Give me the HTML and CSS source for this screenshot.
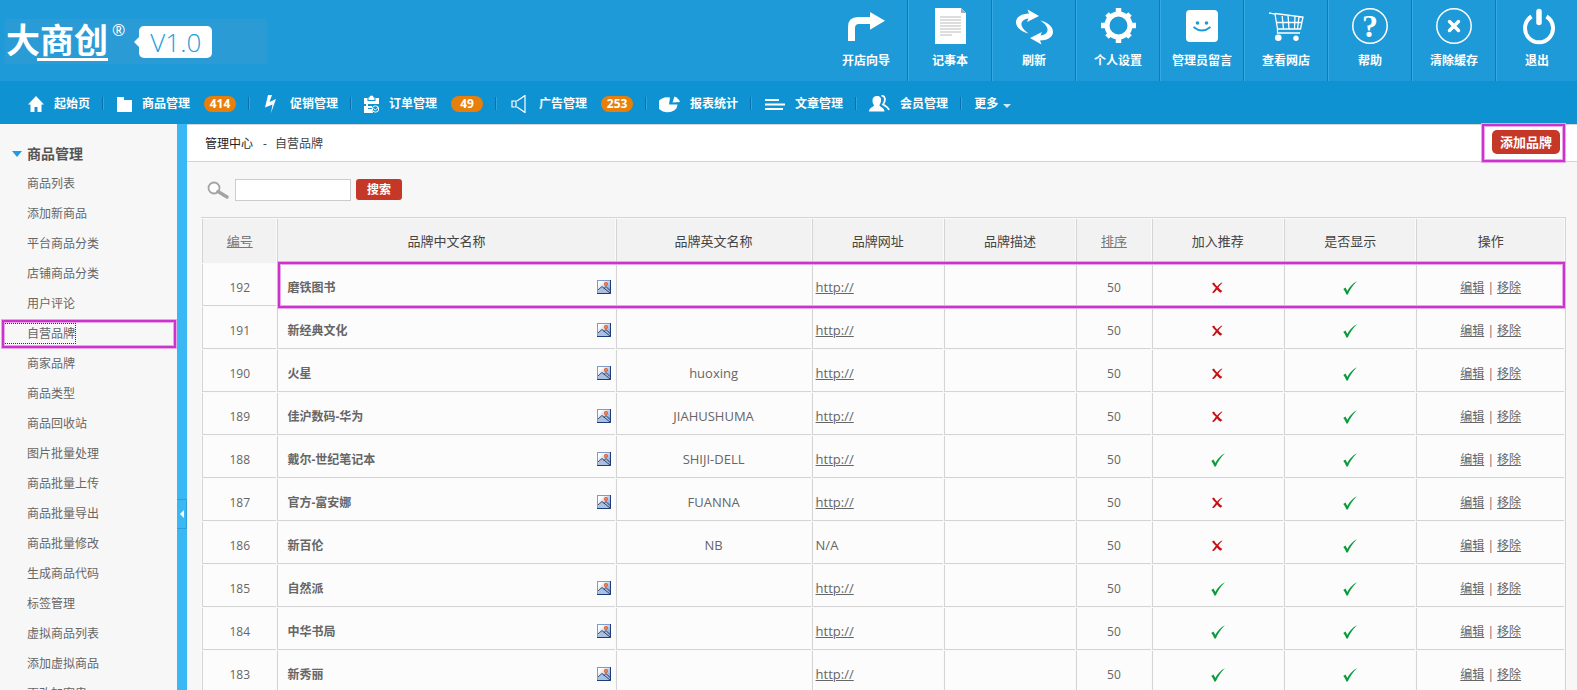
FILE: index.html
```html
<!DOCTYPE html>
<html lang="zh-CN">

<head>
  <meta charset="UTF-8" />
  <title>管理中心 - 自营品牌</title>
  <link rel="stylesheet" href="styles.css">
</head>

<body>

  <!-- 表格里重复使用的图标 -->
  <svg class="sprite" aria-hidden="true">
    <defs>
      <linearGradient id="sky" x1="0" y1="0" x2="1" y2="1">
        <stop offset="0.2" stop-color="#ffffff" />
        <stop offset="1" stop-color="#5f86c9" />
      </linearGradient>
    </defs>
    <symbol id="pic" viewBox="0 0 14 14">
      <rect x="0.5" y="0.5" width="13" height="13" fill="url(#sky)" stroke="#7f9cc6" />
      <path d="M13.5 0v13.5H0" fill="none" stroke="#1d3c7c" />
      <path d="M1 11.5 5 7l2 2 2-2 4 5v1H1z" fill="#a9c0e6" />
      <path d="M1 10 5 6.500l8 6.500M7 8.500l2-2 4 4" fill="none" stroke="#26334d" stroke-width="0.9" />
      <circle cx="9" cy="4" r="2" fill="#e2562a" />
      <circle cx="9" cy="4" r="0.8" fill="#ffc07a" />
    </symbol>
    <symbol id="yes" viewBox="0 0 14 14">
      <path d="M0.3 8 2.5 6.600 4.300 10C6.500 5.800 9.600 2.400 14 0.200 9.800 4 7 8.400 4.800 13.500H3.400C2.600 11.200 1.600 9.600 0.300 8z" fill="#0a9c3c" />
    </symbol>
    <symbol id="no" viewBox="0 0 14 14">
      <path d="M1 2.4 3 1.4C4 3 5 4.4 6.2 5.4 7.6 3.6 9 2.4 11 1.4L11.4 2C9.6 3.4 8.4 4.8 7.4 6.6 8.4 8 9.8 9.2 11.4 10l-2 1.8C8 10.8 7 9.6 6 8.4 4.8 10 4 11 2.8 12L1 11.4C2.4 10 3.8 8.4 4.8 6.8 3.4 5.4 2 4 1 2.4z" fill="#c80f12" />
    </symbol>
  </svg>

  <header class="top">
    <div class="logo">
      <span class="logo-name">大商创</span>
      <span class="logo-reg">®</span>
      <span class="logo-ver">V1.0</span>
    </div>
    <div class="tools">
      <a href="#">
        <svg viewBox="0 0 40 36"><path d="M2 33V19Q2 9 12 9h12V4l15 8.700-15 9V16H13q-4 0-4 4v13z" /></svg>
        开店向导
      </a>
      <a href="#">
        <svg viewBox="0 0 40 36"><path d="M5 0h26l5 5v31H5z" /><path d="M31 0v5h5z" fill="#aaa" /><path d="M10 9h21M10 12h21M10 15h21M10 18h21M10 21h21M10 24h21M10 27h12" stroke="#ddd" stroke-width="2" /></svg>
        记事本
      </a>
      <a href="#">
        <svg viewBox="0 0 40 36"><path id="turn" d="M14.500 25.500C5 23 2 18 2 14 2 9 8 5.500 15 5.500L13.500 1.500 25 8 13 14 14.500 10.500C10 11 7 13.500 7.500 17 8 20 11 23 14.500 25.500z" /><use href="#turn" transform="rotate(180 20.500 19)" /></svg>
        刷新
      </a>
      <a href="#">
        <svg viewBox="0 0 40 36"><circle cx="20.5" cy="17.500" r="11.500" fill="none" stroke="#fff" stroke-width="5" /><path d="M20.500 0v6M20.500 29v6M3 17.500h6M32 17.500h6" stroke="#fff" stroke-width="5.500" /><path d="M9 6l3 3M32 6l-3 3M9 29l3-3M32 29l-3-3" stroke="#fff" stroke-width="5" /></svg>
        个人设置
      </a>
      <a href="#">
        <svg viewBox="0 0 40 36"><rect x="4" y="2" width="32" height="32" rx="4" /><circle cx="15.5" cy="15" r="1.800" fill="#1e9ad8" /><circle cx="24.500" cy="15" r="1.800" fill="#1e9ad8" /><path d="M11.500 19q8.500 7 17 0" fill="none" stroke="#1e9ad8" stroke-width="1.800" /></svg>
        管理员留言
      </a>
      <a href="#">
        <svg viewBox="0 0 40 36"><path d="M3 5l6 1 2.500 15v4H34M9 5.500l28 3.500-2.500 12H11.500M10.500 14.500h25M16 6.500l1.500 14.500M22 7l1 14M29 8l-.5 13M33 8.500 31.500 21" fill="none" stroke="#fff" stroke-width="1.300" /><circle cx="12.300" cy="29.700" r="3.300" /><circle cx="30" cy="30.300" r="2.700" /></svg>
        查看网店
      </a>
      <a href="#">
        <svg viewBox="0 0 40 36"><circle cx="20" cy="18" r="17.200" fill="none" stroke="#fff" stroke-width="1.500" /><text x="20" y="29" class="qmark">?</text></svg>
        帮助
      </a>
      <a href="#">
        <svg viewBox="0 0 40 36"><circle cx="20" cy="18" r="17.200" fill="none" stroke="#fff" stroke-width="1.500" /><path d="M15.500 13.500l9 9M24.500 13.500l-9 9" stroke="#fff" stroke-width="3.500" stroke-linecap="round" /></svg>
        清除缓存
      </a>
      <a href="#">
        <svg viewBox="0 0 40 36"><path d="M14.500 8.500a14 14 0 1 0 15 0" fill="none" stroke="#fff" stroke-width="4" /><path d="M22 3.500v11" stroke="#fff" stroke-width="5.500" stroke-linecap="round" /></svg>
        退出
      </a>
    </div>
  </header>

  <nav class="menu">
    <a href="#">
      <svg class="w16" viewBox="0 0 16 18"><path d="M8 1 0 9.500h2.500V17H6.500v-5h3v5h4V9.500H16z" /></svg>
      <span>起始页</span>
    </a>
    <a href="#">
      <svg class="w16" viewBox="0 0 16 18"><path d="M1 2h7v3h8v12H1z" /></svg>
      <span>商品管理</span> <span class="badge">414</span>
    </a>
    <a href="#">
      <svg class="w18" viewBox="0 0 18 18"><path d="M6 0h4L7.500 7 14 4 9 18 10.500 9.500 3 12.500z" /></svg>
      <span>促销管理</span>
    </a>
    <a href="#">
      <svg class="w15" viewBox="0 0 15 18"><path d="M0 3h3.500v3h8V3H15v6H4v2h4v2H4v1h4l1 4H0V11h2V9H0z" /><path d="M4.500 2.500h1a2 2 0 0 1 4 0h1V5h-6z" /><circle cx="11.500" cy="14" r="3.200" fill="none" stroke="#fff" /><path d="M9.500 13.500l2 1.500 3-3" fill="none" stroke="#fff" /></svg>
      <span>订单管理</span> <span class="badge">49</span>
    </a>
    <a href="#">
      <svg class="w20" viewBox="0 0 20 18"><path d="M3 6h4v6H3zM8 6l8-5.500v17L8 12" fill="none" stroke="#fff" stroke-width="1.200" /></svg>
      <span>广告管理</span> <span class="badge">253</span>
    </a>
    <a href="#">
      <svg class="w21" viewBox="0 0 21 18"><path d="M11 2.500A10 7.500 0 1 0 18.500 9.500L10 9.500z" /><path d="M13.500 7.500 15.500 1.500Q20 3.500 21 7z" /></svg>
      <span>报表统计</span>
    </a>
    <a href="#">
      <svg class="w21" viewBox="0 0 21 18"><path d="M1 5h14M1 9.500h20M1 14h18" stroke="#fff" stroke-width="2" /></svg>
      <span>文章管理</span>
    </a>
    <a href="#">
      <svg class="w21" viewBox="0 0 21 18"><path d="M8 1c3 0 4.500 2 4 5-.3 2-1 3-1.500 4 0 2 5 2.500 5 6.500H0c0-4 5-4.500 5-6.500C4 9 3.500 7.500 3.500 5.500 3.500 2.500 5 1 8 1z" /><path d="M12.500.700c4 0 4.500 5 1.500 8.800 3 1.500 5 3 6 5.500" fill="none" stroke="#fff" stroke-width="1.800" /></svg>
      <span>会员管理</span>
    </a>
    <a href="#"><span>更多</span> <i class="caret"></i></a>
  </nav>

  <div class="page">

    <aside class="side">
      <h3>商品管理</h3>
      <ul>
        <li><a href="#">商品列表</a></li>
        <li><a href="#">添加新商品</a></li>
        <li><a href="#">平台商品分类</a></li>
        <li><a href="#">店铺商品分类</a></li>
        <li><a href="#">用户评论</a></li>
        <li class="marked"><a href="#">自营品牌</a></li>
        <li><a href="#">商家品牌</a></li>
        <li><a href="#">商品类型</a></li>
        <li><a href="#">商品回收站</a></li>
        <li><a href="#">图片批量处理</a></li>
        <li><a href="#">商品批量上传</a></li>
        <li><a href="#">商品批量导出</a></li>
        <li><a href="#">商品批量修改</a></li>
        <li><a href="#">生成商品代码</a></li>
        <li><a href="#">标签管理</a></li>
        <li><a href="#">虚拟商品列表</a></li>
        <li><a href="#">添加虚拟商品</a></li>
        <li><a href="#">更改加密串</a></li>
      </ul>
    </aside>

    <div class="split"><button type="button" aria-label="收起菜单"></button></div>

    <main class="main">
      <div class="crumbs">
        <a href="#">管理中心</a>
        <span>-</span>
        <span>自营品牌</span>
        <div class="add-wrap"><button type="button" class="btn add">添加品牌</button></div>
      </div>

      <form class="search">
        <label for="keyword" aria-label="品牌名称">
          <svg viewBox="0 0 24 20"><circle cx="8" cy="8" r="5.500" fill="#fff" stroke="#a3a3a3" stroke-width="1.800" /><path d="M12 11.500 21 17" stroke="#a3a3a3" stroke-width="3.500" stroke-linecap="round" /></svg>
        </label>
        <input id="keyword" type="text" />
        <button type="button" class="btn">搜索</button>
      </form>

      <div class="list">
        <table>
          <colgroup>
            <col class="c-id"><col class="c-name"><col class="c-en"><col class="c-mid"><col class="c-mid"><col class="c-id"><col class="c-mid"><col class="c-mid"><col>
          </colgroup>
          <thead>
            <tr>
              <th><a href="#">编号</a></th>
              <th>品牌中文名称</th>
              <th>品牌英文名称</th>
              <th>品牌网址</th>
              <th>品牌描述</th>
              <th><a href="#">排序</a></th>
              <th>加入推荐</th>
              <th>是否显示</th>
              <th>操作</th>
            </tr>
          </thead>
          <tbody>
            <tr>
              <td>192</td>
              <td class="name"><div>磨铁图书 <svg><use href="#pic" /></svg></div></td>
              <td class="en"></td>
              <td class="url"><a href="#">http://</a></td>
              <td></td>
              <td>50</td>
              <td><svg><use href="#no" /></svg></td>
              <td><svg><use href="#yes" /></svg></td>
              <td><a href="#">编辑</a> | <a href="#">移除</a></td>
            </tr>
            <tr>
              <td>191</td>
              <td class="name"><div>新经典文化 <svg><use href="#pic" /></svg></div></td>
              <td class="en"></td>
              <td class="url"><a href="#">http://</a></td>
              <td></td>
              <td>50</td>
              <td><svg><use href="#no" /></svg></td>
              <td><svg><use href="#yes" /></svg></td>
              <td><a href="#">编辑</a> | <a href="#">移除</a></td>
            </tr>
            <tr>
              <td>190</td>
              <td class="name"><div>火星 <svg><use href="#pic" /></svg></div></td>
              <td class="en">huoxing</td>
              <td class="url"><a href="#">http://</a></td>
              <td></td>
              <td>50</td>
              <td><svg><use href="#no" /></svg></td>
              <td><svg><use href="#yes" /></svg></td>
              <td><a href="#">编辑</a> | <a href="#">移除</a></td>
            </tr>
            <tr>
              <td>189</td>
              <td class="name"><div>佳沪数码-华为 <svg><use href="#pic" /></svg></div></td>
              <td class="en">JIAHUSHUMA</td>
              <td class="url"><a href="#">http://</a></td>
              <td></td>
              <td>50</td>
              <td><svg><use href="#no" /></svg></td>
              <td><svg><use href="#yes" /></svg></td>
              <td><a href="#">编辑</a> | <a href="#">移除</a></td>
            </tr>
            <tr>
              <td>188</td>
              <td class="name"><div>戴尔-世纪笔记本 <svg><use href="#pic" /></svg></div></td>
              <td class="en">SHIJI-DELL</td>
              <td class="url"><a href="#">http://</a></td>
              <td></td>
              <td>50</td>
              <td><svg><use href="#yes" /></svg></td>
              <td><svg><use href="#yes" /></svg></td>
              <td><a href="#">编辑</a> | <a href="#">移除</a></td>
            </tr>
            <tr>
              <td>187</td>
              <td class="name"><div>官方-富安娜 <svg><use href="#pic" /></svg></div></td>
              <td class="en">FUANNA</td>
              <td class="url"><a href="#">http://</a></td>
              <td></td>
              <td>50</td>
              <td><svg><use href="#no" /></svg></td>
              <td><svg><use href="#yes" /></svg></td>
              <td><a href="#">编辑</a> | <a href="#">移除</a></td>
            </tr>
            <tr>
              <td>186</td>
              <td class="name"><div>新百伦</div></td>
              <td class="en">NB</td>
              <td class="url">N/A</td>
              <td></td>
              <td>50</td>
              <td><svg><use href="#no" /></svg></td>
              <td><svg><use href="#yes" /></svg></td>
              <td><a href="#">编辑</a> | <a href="#">移除</a></td>
            </tr>
            <tr>
              <td>185</td>
              <td class="name"><div>自然派 <svg><use href="#pic" /></svg></div></td>
              <td class="en"></td>
              <td class="url"><a href="#">http://</a></td>
              <td></td>
              <td>50</td>
              <td><svg><use href="#yes" /></svg></td>
              <td><svg><use href="#yes" /></svg></td>
              <td><a href="#">编辑</a> | <a href="#">移除</a></td>
            </tr>
            <tr>
              <td>184</td>
              <td class="name"><div>中华书局 <svg><use href="#pic" /></svg></div></td>
              <td class="en"></td>
              <td class="url"><a href="#">http://</a></td>
              <td></td>
              <td>50</td>
              <td><svg><use href="#yes" /></svg></td>
              <td><svg><use href="#yes" /></svg></td>
              <td><a href="#">编辑</a> | <a href="#">移除</a></td>
            </tr>
            <tr>
              <td>183</td>
              <td class="name"><div>新秀丽 <svg><use href="#pic" /></svg></div></td>
              <td class="en"></td>
              <td class="url"><a href="#">http://</a></td>
              <td></td>
              <td>50</td>
              <td><svg><use href="#yes" /></svg></td>
              <td><svg><use href="#yes" /></svg></td>
              <td><a href="#">编辑</a> | <a href="#">移除</a></td>
            </tr>
          </tbody>
        </table>
      </div>
    </main>

  </div>

</body>

</html>
```
FILE: styles.css
```css
*,
*::before,
*::after {
  box-sizing: border-box;
}

body {
  margin: 0;
  height: 100vh;
  display: flex;
  flex-direction: column;
  overflow: hidden;
  font-family: "Open Sans", "Noto Sans CJK SC", sans-serif;
  font-size: 12px;
  color: #666;
  background: #f7f7f7;
}

a {
  color: inherit;
}

.sprite {
  position: absolute;
  width: 0;
  height: 0;
}

/* 顶部 */
.top {
  display: flex;
  justify-content: space-between;
  height: 81px;
  flex: none;
  background: #1e9ad8;
}

.logo {
  display: flex;
  align-items: center;
  width: 262px;
  height: 45px;
  margin: 19px 0 0 5px;
  background: #2b9bd6;
  color: #fff;
}

.logo-name {
  position: relative;
  margin-left: 1px;
  padding-bottom: 4px;
  font-size: 34px;
  line-height: 36px;
  font-weight: bold;
}

.logo-name::after {
  content: "";
  position: absolute;
  left: 31px;
  right: 0;
  bottom: 1px;
  height: 3px;
  background: #fff;
}

.logo-reg {
  align-self: flex-start;
  margin: 1px 14px 0 4px;
  font-size: 16px;
  line-height: 20px;
}

.logo-ver {
  position: relative;
  width: 73px;
  border-radius: 5px;
  background: #fff;
  color: #22a0d8;
  font-size: 26px;
  line-height: 32px;
  font-weight: 300;
  text-align: center;
}

.logo-ver::before {
  content: "";
  position: absolute;
  left: -5px;
  top: 11px;
  border: 5px solid transparent;
  border-left: 0;
  border-right-color: #fff;
}

.tools {
  display: flex;
}

.tools a {
  display: flex;
  flex-direction: column;
  align-items: center;
  gap: 8px;
  width: 84px;
  padding-top: 8px;
  border-left: 1px solid #35a9e3;
  border-right: 1px solid #0a7cc0;
  color: #fff;
  font-weight: bold;
  line-height: 18px;
  text-decoration: none;
}

.tools a:first-child {
  border-left-color: transparent;
}

.tools a:last-child {
  width: 81px;
  border-right: 0;
}

.tools svg {
  width: 40px;
  height: 36px;
  overflow: visible;
  fill: #fff;
}

.qmark {
  font-family: "Liberation Serif", serif;
  font-size: 32px;
  font-weight: bold;
  text-anchor: middle;
}

/* 主菜单 */
.menu {
  display: flex;
  align-items: center;
  height: 43px;
  flex: none;
  padding-left: 14px;
  border-top: 1px solid #158fcd;
  background: #0f92d2;
}

.menu a {
  position: relative;
  display: flex;
  align-items: center;
  padding: 1px 12px 0 14px;
  color: #fff;
  font-weight: bold;
  line-height: 18px;
  text-decoration: none;
}

.menu a + a::before {
  content: "";
  position: absolute;
  left: 0;
  top: 3px;
  width: 2px;
  height: 13px;
  border-left: 1px solid #0a70b0;
  border-right: 1px solid #2fa5e0;
}

.menu svg {
  height: 18px;
  margin-right: 10px;
  fill: #fff;
}

.w15 {
  width: 15px;
}

.w16 {
  width: 16px;
}

.w18 {
  width: 18px;
}

.w20 {
  width: 20px;
}

.w21 {
  width: 21px;
}

.menu .badge {
  width: 32px;
  margin-left: 14px;
  border-radius: 8px;
  background: #e87f0a;
  line-height: 16px;
  text-align: center;
}

.caret {
  margin: 4px 0 0 5px;
  border: 4px solid transparent;
  border-top-color: #cfe9f8;
  border-bottom: 0;
}

.page {
  display: flex;
  flex: 1;
  min-height: 0;
}

/* 左侧菜单 */
.side {
  width: 177px;
  flex: none;
  overflow: hidden;
}

.side h3 {
  display: flex;
  align-items: center;
  gap: 5px;
  margin: 0;
  padding: 15px 0 0 12px;
  color: #555;
  font-size: 14px;
  line-height: 30px;
}

.side h3::before {
  content: "";
  border: 5px solid transparent;
  border-top: 6px solid #1f9be6;
  border-bottom: 0;
}

.side ul {
  margin: 0;
  padding: 0;
  list-style: none;
}

.side li {
  height: 30px;
  line-height: 30px;
}

.side li a {
  display: inline-block;
  padding-left: 27px;
  line-height: 19px;
  text-decoration: none;
}

.marked {
  position: relative;
}

.marked a {
  outline: 1px dotted #333;
}

/* 紫色标注框 */
.marked::after,
.add-wrap,
.list::after {
  border: 2px solid #cc33cc;
  box-shadow: 0 0 0 1px #e8a6e8, inset 0 0 0 1px #e8a6e8;
}

.marked::after {
  content: "";
  position: absolute;
  left: 2px;
  right: 1px;
  top: 1px;
  bottom: 1px;
}

.split {
  display: flex;
  align-items: center;
  width: 10px;
  flex: none;
  padding-top: 214px;
  background: #3ab8f4;
}

.split button {
  display: flex;
  align-items: center;
  justify-content: center;
  width: 10px;
  height: 30px;
  padding: 0;
  border: 1px solid #2aa0dc;
  border-left: 0;
  background: none;
}

.split button::before {
  content: "";
  border: 4px solid transparent;
  border-left: 0;
  border-right-color: #fff;
}

/* 内容区 */
.main {
  flex: 1;
  min-width: 0;
}

.crumbs {
  display: flex;
  align-items: center;
  gap: 8px;
  height: 38px;
  padding: 0 12px 0 18px;
  border: 1px solid #d4d4d4;
  border-width: 1px 0;
  background: #fff;
  color: #444;
}

.crumbs a {
  margin-right: 2px;
  color: #222;
  text-decoration: none;
}

.add-wrap {
  position: relative;
  margin-left: auto;
  padding: 4px 3px 6px 8px;
}

.btn {
  height: 21px;
  padding: 0 11px;
  border: 0;
  border-radius: 3px;
  background: #c53827;
  color: #fff;
  font: bold 12px/18px "Open Sans", "Noto Sans CJK SC", sans-serif;
}

.add {
  display: block;
  height: 24px;
  padding: 0 8px;
  border-radius: 5px;
  font-size: 13px;
}

.search {
  display: flex;
  align-items: center;
  height: 55px;
  padding-left: 19px;
}

.search label,
.search svg {
  display: block;
  width: 24px;
  height: 20px;
}

.search input {
  width: 116px;
  height: 22px;
  margin: 0 5px;
  border: 1px solid #ccc;
  background: #fff;
}

.list {
  position: relative;
  margin: 0 11px 0 14px;
}

/* 第一行的标注 */
.list::after {
  content: "";
  position: absolute;
  left: 77px;
  right: 1px;
  top: 45px;
  height: 46px;
}

table {
  width: 100%;
  table-layout: fixed;
  border: 1px solid #d4d4d4;
  border-width: 1px 1px 0 0;
  border-spacing: 1px;
  background: #fafafa;
}

.c-id {
  width: 5.5%;
}

.c-name {
  width: 24.9%;
}

.c-en {
  width: 14.4%;
}

.c-mid {
  width: 9.7%;
}

th,
td {
  padding: 0;
  border-left: 1px solid #d4d4d4;
  text-align: center;
}

th {
  height: 44px;
  padding-bottom: 2px;
  background: #f2f2f2;
  color: #444;
  font-size: 13px;
  font-weight: normal;
}

th a {
  color: #777;
}

td {
  height: 42px;
  padding-top: 5px;
  border-bottom: 1px solid #d4d4d4;
  background: #fcfcfc;
}

td svg {
  display: inline-block;
  width: 14px;
  height: 14px;
  vertical-align: middle;
}

.name div {
  display: flex;
  align-items: center;
  justify-content: space-between;
  padding: 0 4px 0 9px;
  font-weight: bold;
}

.en,
.url {
  font-size: 13px;
}

.url {
  padding-left: 3px;
  text-align: left;
}
```
